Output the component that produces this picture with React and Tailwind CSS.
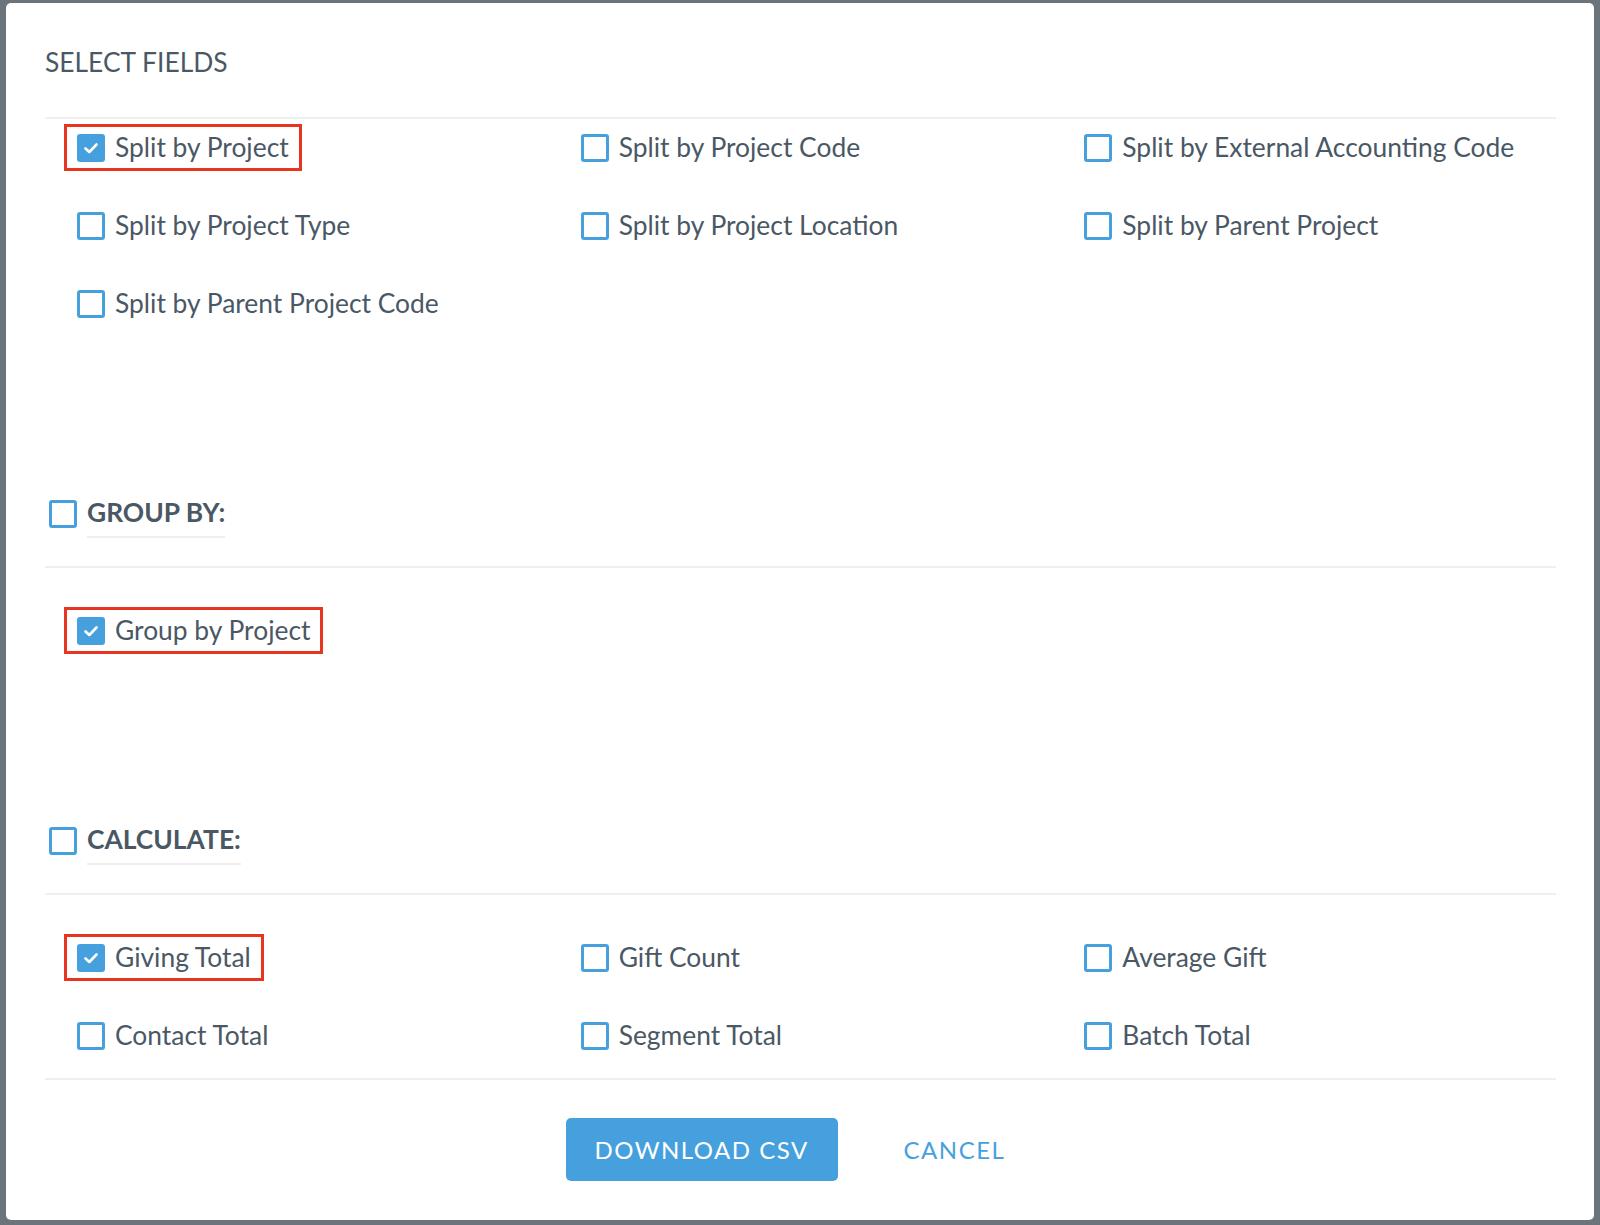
const textCls = 'text-[26.4px] leading-[31px] text-[#4a5865]'

function Box({ checked }) {
  if (checked) {
    return (
      <span className="flex h-[28px] w-[28px] shrink-0 items-center justify-center rounded-[3px] bg-[#47a0de]">
        <svg width="18" height="18" viewBox="0 0 18 18" fill="none">
          <polyline points="3.5,9.5 7.3,13 14.5,5.5" stroke="white" strokeWidth="2.6" strokeLinecap="round" strokeLinejoin="round" />
        </svg>
      </span>
    )
  }
  return <span className="block h-[28px] w-[28px] shrink-0 rounded-[3px] border-[3px] border-[#47a0de] bg-white" />
}

function Option({ label, checked }) {
  return (
    <div className="pl-[19px]">
      <div
        className={
          'inline-flex h-[47px] items-center gap-[10px] border-[3px] pl-[10px] pr-[10px] ' +
          (checked ? 'border-[#e8351f]' : 'border-transparent')
        }
      >
        <Box checked={checked} />
        <span className={textCls}>{label}</span>
      </div>
    </div>
  )
}

function GroupHeader({ label }) {
  return (
    <div className="flex items-start gap-[10px] pl-[4px]">
      <span className="mt-[5px]">
        <Box />
      </span>
      <span className="mt-[2px] border-b-2 border-[#efefef] pb-[8px] text-[26.4px] font-bold leading-[31px] text-[#4a5865]">
        {label}
      </span>
    </div>
  )
}

const Divider = ({ className }) => <div className={'h-[2px] bg-[#efefef] ' + (className || '')} />

export default function App() {
  return (
    <div
      className="min-h-screen w-full bg-[#6b737b] pl-[6px] pt-[3px]"
      style={{ fontFamily: 'Lato, "Open Sans", sans-serif' }}
    >
      <div className="h-[1217px] w-[1588px] rounded-[5px] bg-white pl-[39px] pr-[38px]">
        <div className="pt-[44px] text-[26.4px] leading-[31px] text-[#4a5865]">SELECT FIELDS</div>
        <Divider className="mt-[39px]" />

        <div className="mt-[5px] grid grid-cols-3 gap-y-[31px]">
          <Option label="Split by Project" checked />
          <Option label="Split by Project Code" />
          <Option label="Split by External Accounting Code" />
          <Option label="Split by Project Type" />
          <Option label="Split by Project Location" />
          <Option label="Split by Parent Project" />
          <Option label="Split by Parent Project Code" />
        </div>

        <div className="mt-[168px]">
          <GroupHeader label="GROUP BY:" />
        </div>
        <Divider className="mt-[28px]" />
        <div className="mt-[39px] grid grid-cols-3">
          <Option label="Group by Project" checked />
        </div>

        <div className="mt-[168px]">
          <GroupHeader label="CALCULATE:" />
        </div>
        <Divider className="mt-[28px]" />
        <div className="mt-[39px] grid grid-cols-3 gap-y-[31px]">
          <Option label="Giving Total" checked />
          <Option label="Gift Count" />
          <Option label="Average Gift" />
          <Option label="Contact Total" />
          <Option label="Segment Total" />
          <Option label="Batch Total" />
        </div>
        <Divider className="mt-[19px]" />

        <div className="mt-[38px] flex items-center justify-center gap-[36px]">
          <button className="h-[63px] w-[272px] rounded-[5px] bg-[#47a0de] text-[24px] tracking-[1.5px] text-white">
            DOWNLOAD CSV
          </button>
          <button className="px-[30px] text-[24px] tracking-[1.5px] text-[#47a0de]">CANCEL</button>
        </div>
      </div>
    </div>
  )
}
